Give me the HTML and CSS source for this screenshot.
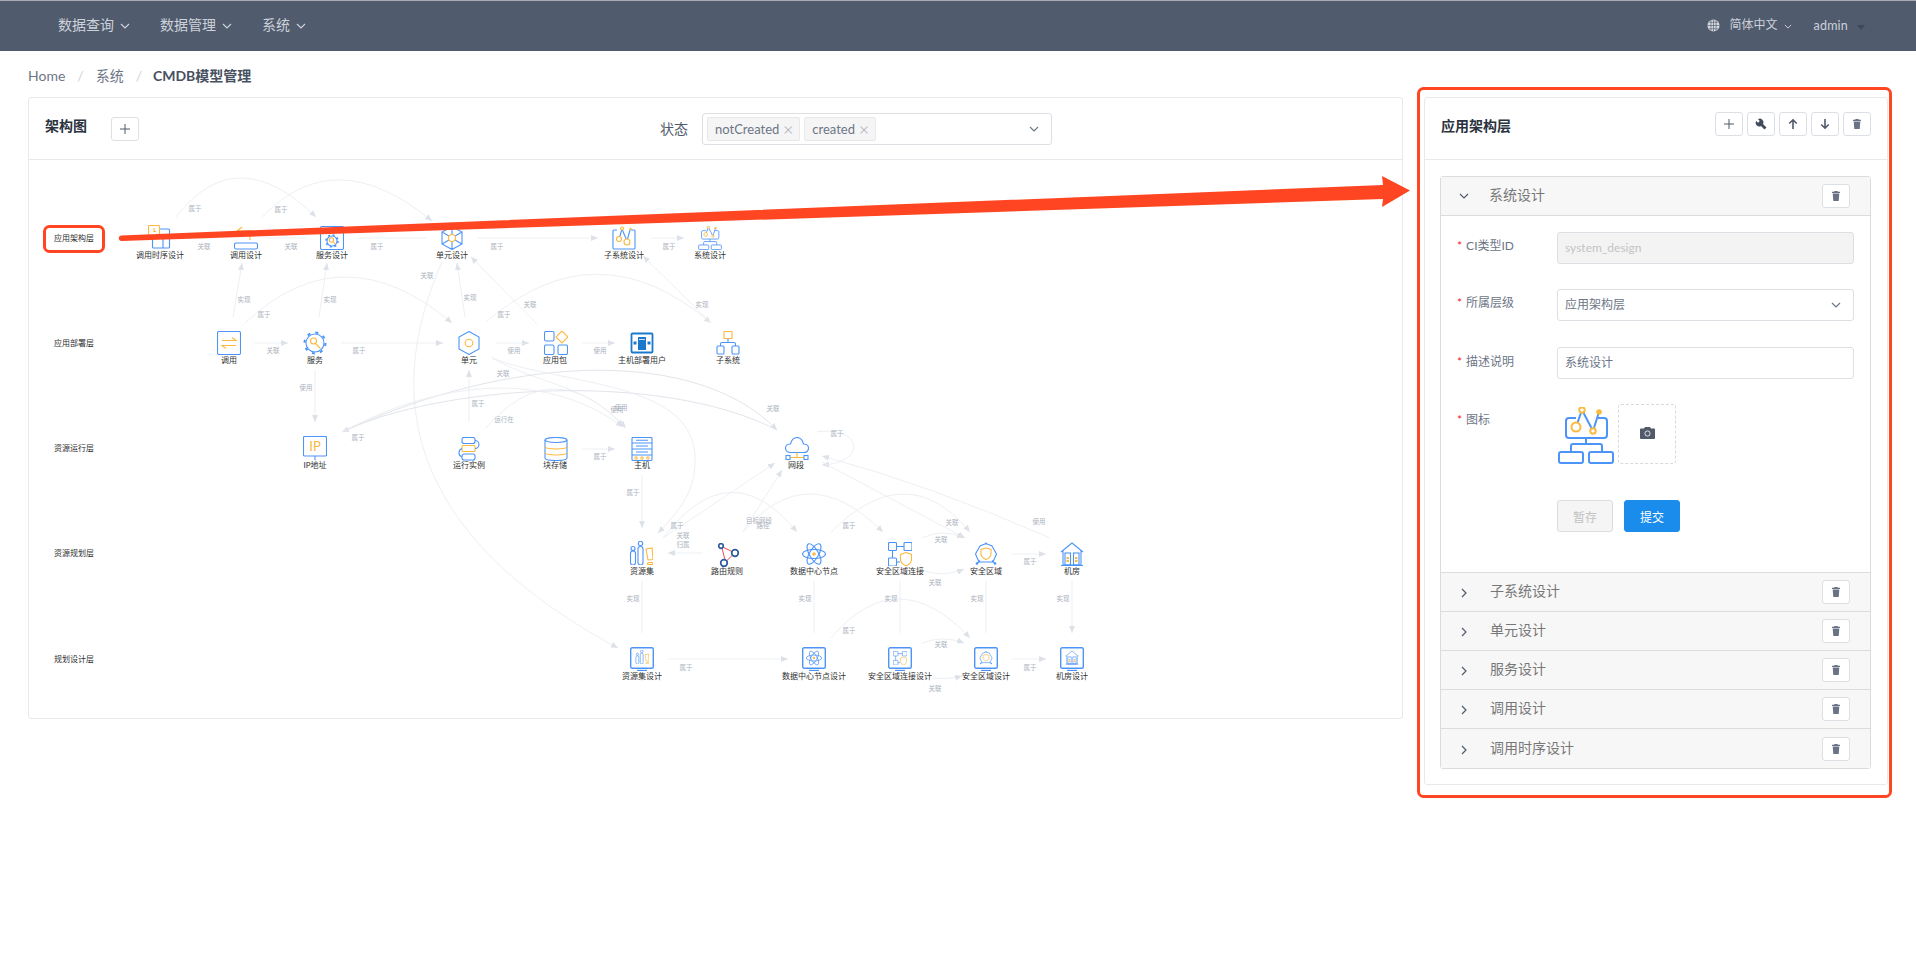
FILE: index.html
```html
<!DOCTYPE html>
<html lang="zh-CN">
<head>
<meta charset="utf-8">
<title>CMDB模型管理</title>
<link rel="stylesheet" href="styles.css">
</head>
<body>
<svg class="sprite" xmlns="http://www.w3.org/2000/svg">
  <symbol id="chev-d" viewBox="0 0 10 6"><path class="ch" d="M1 1l4 4 4-4"/></symbol>
  <symbol id="chev-r" viewBox="0 0 6 10"><path class="ch" d="M1 1l4 4-4 4"/></symbol>
  <symbol id="trash" viewBox="0 0 12 12"><path class="it" d="M4.500 1h3l.4.8h2.100v1.100H2V1.800h2.100zM2.700 3.500h6.600l-.6 7.500H3.300z"/></symbol>
  <symbol id="plus" viewBox="0 0 12 12"><path class="ic" d="M6 1v10M1 6h10"/></symbol>
  <symbol id="wrench" viewBox="0 0 12 12"><path class="ig" d="M1.200 3L3 4.800 4.800 3 3 1.200A3.600 3.600 0 0 1 8 6l3.500 3.500-2 2L6 8A3.600 3.600 0 0 1 1.200 3z"/></symbol>
  <symbol id="up" viewBox="0 0 12 12"><path class="ia" d="M6 11V2M2.300 5.500L6 1.800l3.700 3.700"/></symbol>
  <symbol id="down" viewBox="0 0 12 12"><path class="ia" d="M6 1v9M2.300 6.500L6 10.200l3.700-3.700"/></symbol>

  <symbol id="i-seq" viewBox="0 0 24 24"><rect class="y" x=".5" y=".5" width="11" height="11" rx="1"/><path class="y" d="M6 3v3.500h2"/><path class="b" d="M12 4h8.500a1 1 0 0 1 1 1v17a1 1 0 0 1-1 1h-15a1 1 0 0 1-1-1V12M15 12.500V23M5 13h17"/></symbol>
  <symbol id="i-cald" viewBox="0 0 24 24"><path class="y" d="M8 1L3 5l5 4M3 5h13v9"/><rect class="b" x=".5" y="17" width="23" height="6" rx="1.500"/></symbol>
  <symbol id="i-svcd" viewBox="0 0 24 24"><rect class="b" x=".5" y=".5" width="23" height="23" rx="1.500"/><circle class="b" cx="12" cy="15" r="5"/><circle class="b td" cx="12" cy="15" r="6"/><circle class="y" cx="11.500" cy="14" r="2.200"/><path class="y" d="M13 15.500l2.500 3"/></symbol>
  <symbol id="i-unitd" viewBox="0 0 24 24"><path class="b" d="M12 .5L22 6v12l-10 5.500L2 18V6zM12 .5V8M2 6l7 4M22 6l-7 4M2 18l7-4M22 18l-7-4M12 16v7.500"/><circle class="y" cx="12" cy="12" r="3.500"/></symbol>
  <symbol id="i-subd" viewBox="0 0 24 24"><path class="b" d="M5 4H2a1 1 0 0 0-1 1v17a1 1 0 0 0 1 1h20a1 1 0 0 0 1-1V5a1 1 0 0 0-1-1h-3M7 13l3-10 5 12 3-11"/><circle class="y w" cx="7" cy="13" r="2.500"/><circle class="y w" cx="10" cy="2.500" r="1.500"/><circle class="y w" cx="15" cy="16" r="3"/><circle class="yf" cx="18.500" cy="3" r="1.200"/></symbol>
  <symbol id="i-sys" viewBox="0 0 56 57"><path class="b s2" d="M18 11H11a3 3 0 0 0-3 3v14a3 3 0 0 0 3 3h35a3 3 0 0 0 3-3V14a3 3 0 0 0-3-3h-6M18 20L24 3l11 21 6-19M28 31v6M13 45v-6a2 2 0 0 1 2-2h27a2 2 0 0 1 2 2v6"/><rect class="b s2" x="1" y="45" width="24" height="11" rx="2"/><rect class="b s2" x="31" y="45" width="24" height="11" rx="2"/><circle class="y w s2" cx="18" cy="20" r="4.500"/><circle class="y w s2" cx="24" cy="3" r="2.700"/><circle class="y w s2" cx="35" cy="24" r="2.700"/><circle class="yf" cx="41" cy="5" r="2.800"/></symbol>
  <symbol id="i-call" viewBox="0 0 24 24"><rect class="b" x=".5" y=".5" width="23" height="23" rx="1.500"/><path class="y" d="M5 9.500h14l-4-3M19 14.500H5l4 3"/></symbol>
  <symbol id="i-svc" viewBox="0 0 24 24"><circle class="b" cx="12" cy="12" r="9"/><circle class="b td2" cx="12" cy="12" r="10.500"/><circle class="y" cx="10.500" cy="10" r="3"/><path class="y" d="M12.500 12.500l5 5"/></symbol>
  <symbol id="i-unit" viewBox="0 0 24 24"><path class="b" d="M12 .5L22 6v12l-10 5.500L2 18V6z"/><circle class="y" cx="12" cy="12" r="3.800"/></symbol>
  <symbol id="i-pkg" viewBox="0 0 24 24"><rect class="b" x=".5" y=".5" width="9.500" height="9.500" rx="1.500"/><path class="y" d="M18 0l6 6-6 6-6-6z"/><rect class="b" x=".5" y="14" width="9.500" height="9.500" rx="1.500"/><rect class="b" x="14" y="14" width="9.500" height="9.500" rx="1.500"/></symbol>
  <symbol id="i-hu" viewBox="0 0 24 24"><rect class="hu" x="1.500" y="2.500" width="21" height="19" rx="1"/><rect class="huf" x="8" y="6" width="8" height="13"/><rect class="huf" x="3.500" y="10.500" width="3" height="3"/><rect class="huf" x="17.500" y="10.500" width="3" height="3"/><path class="hw" d="M9 8.500h6"/></symbol>
  <symbol id="i-sub" viewBox="0 0 24 24"><rect class="y" x="8" y=".5" width="8" height="7" rx=".5"/><path class="b" d="M12 7.500v4M4.500 15v-2A1.500 1.500 0 0 1 6 11.500h12a1.500 1.500 0 0 1 1.500 1.500v2"/><rect class="b" x="1" y="15" width="7" height="8" rx="1"/><rect class="b" x="16" y="15" width="7" height="8" rx="1"/></symbol>
  <symbol id="i-ip" viewBox="0 0 24 24"><rect class="b" x=".5" y=".5" width="23" height="19.500" rx="1"/><path class="b" d="M12 20v4"/><text class="ipt" x="12" y="15">IP</text></symbol>
  <symbol id="i-inst" viewBox="0 0 24 24"><rect class="b" x="5" y=".5" width="13" height="6" rx="2"/><rect class="y" x="5" y="8.500" width="13" height="6" rx="1"/><rect class="b" x="5" y="17" width="13" height="6" rx="2"/><path class="b" d="M18 3.500a4 4 0 0 1 0 8M5 11.500a4.500 4.500 0 0 0 0 8.500"/></symbol>
  <symbol id="i-store" viewBox="0 0 24 24"><ellipse class="b" cx="12" cy="3" rx="11" ry="2.500"/><path class="b" d="M1 3v18c0 1.500 5 2.500 11 2.500s11-1 11-2.500V3"/><path class="y" d="M1 9.500c0 1.500 5 2.500 11 2.500s11-1 11-2.500M1 15.500c0 1.500 5 2.500 11 2.500s11-1 11-2.500"/></symbol>
  <symbol id="i-host" viewBox="0 0 24 24"><rect class="b" x="2" y=".5" width="20" height="23" rx="1"/><path class="b" d="M2 6h20M2 12h20M2 18h20M6 3.300h12M6 9h12M6 15h12"/><circle class="y" cx="6" cy="21" r="1.200"/><circle class="y" cx="12" cy="21" r="1.200"/><circle class="y" cx="18" cy="21" r="1.200"/></symbol>
  <symbol id="i-net" viewBox="0 0 24 24"><path class="b" d="M6 15.500C2 15.500.5 13 .5 11 .5 8.500 3 7 5.500 7 6.500 3 9 .5 12 .5c3.500 0 5.500 2.500 6.500 6.500 2.500 0 5 1.500 5 4 0 2.500-2 4.500-5.500 4.500z"/><path class="y" d="M12 15.500v5M5 20.500h14"/><rect class="b" x="1" y="18.500" width="4" height="4"/><rect class="b" x="19" y="18.500" width="4" height="4"/></symbol>
  <symbol id="i-rs" viewBox="0 0 24 24"><rect class="b" x="1.500" y="10" width="5" height="14" rx="2.500"/><circle class="b" cx="4" cy="7.500" r="2"/><rect class="b" x="9" y="5.500" width="5" height="18.500" rx="2.500"/><circle class="b" cx="11.500" cy="2.500" r="2.200"/><path class="y" d="M17 8l6-1 1 11.500-5 .5z"/><rect class="y" x="18.500" y="21.500" width="5.500" height="2" rx="1"/></symbol>
  <symbol id="i-route" viewBox="0 0 24 24"><path class="r" d="M6 5l3 12M6.500 4L17 9M10.500 18l6-6"/><circle class="dk" cx="5" cy="3" r="2.300"/><circle class="dk" cx="19" cy="10" r="3.300"/><circle class="dk" cx="8" cy="20" r="3.300"/></symbol>
  <symbol id="i-dc" viewBox="0 0 24 24"><ellipse class="b" cx="12" cy="12" rx="11.500" ry="4.500"/><ellipse class="b" cx="12" cy="12" rx="11.500" ry="4.500" transform="rotate(60 12 12)"/><ellipse class="b" cx="12" cy="12" rx="11.500" ry="4.500" transform="rotate(120 12 12)"/><circle class="yf" cx="12" cy="12" r="1.800"/></symbol>
  <symbol id="i-secl" viewBox="0 0 24 24"><rect class="b" x=".5" y=".5" width="8" height="8" rx="1"/><rect class="b" x="16" y=".5" width="8" height="8" rx="1"/><rect class="b" x=".5" y="16" width="8" height="8" rx="1"/><path class="b" d="M8.500 4.500H16M4.500 8.500V16M8.500 20H12"/><path class="y w" d="M18 10.500l5.500 2v5c0 3-2.500 5-5.500 6.500-3-1.500-5.500-3.500-5.500-6.500v-5z"/></symbol>
  <symbol id="i-sec" viewBox="0 0 24 24"><path class="b" d="M12 1.500L6 4 1.500 12 5 20h14l3.500-8L18 4zM3 21.500l3-3M21 21.500l-3-3"/><circle class="bf" cx="12" cy="1.500" r="1"/><circle class="bf" cx="3" cy="21.500" r="1.300"/><circle class="bf" cx="21" cy="21.500" r="1.300"/><path class="y" d="M12 6l5 1.500v4c0 3-2.500 5-5 6-2.500-1-5-3-5-6v-4z"/></symbol>
  <symbol id="i-room" viewBox="0 0 24 24"><path class="b" d="M1 10L12 1l11 9M3 8.500V23h18V8.500M1 23.500h22"/><rect class="b" x="5" y="11" width="5.500" height="12"/><rect class="b" x="13.500" y="11" width="5.500" height="12"/><path class="yb" d="M7.700 15v6M16.200 15v6"/></symbol>
  <symbol id="i-frame" viewBox="0 0 24 24"><rect class="b s13" x=".7" y=".7" width="22.600" height="20.600" rx="1.500"/><path class="b s13" d="M7 23.500h10"/></symbol>
</svg>

<header class="topbar">
  <nav class="nav">
    <a class="nav-item">数据查询<svg class="nav-chev"><use href="#chev-d"/></svg></a>
    <a class="nav-item">数据管理<svg class="nav-chev"><use href="#chev-d"/></svg></a>
    <a class="nav-item">系统<svg class="nav-chev"><use href="#chev-d"/></svg></a>
  </nav>
  <div class="top-right">
    <svg class="globe" viewBox="0 0 14 14"><circle class="gf" cx="7" cy="7" r="6.500"/><path class="gl" d="M.5 7h13M7 .5v13M2 3.500h10M2 10.500h10M4.300 1.200v11.600M9.700 1.200v11.600"/></svg>
    <span class="lang">简体中文</span><svg class="nav-chev lang-chev"><use href="#chev-d"/></svg>
    <span class="user">admin</span><span class="caret"></span>
  </div>
</header>

<div class="crumbs">
  <span>Home</span><i>/</i><span>系统</span><i>/</i><b>CMDB模型管理</b>
</div>

<main class="layout">
  <section class="card">
    <div class="card-head">
      <h2 class="card-title">架构图</h2>
      <button class="btn add-btn"><svg class="ico"><use href="#plus"/></svg></button>
      <div class="filter">
        <label class="filter-label">状态</label>
        <div class="multi">
          <span class="tag">notCreated<em>×</em></span>
          <span class="tag">created<em>×</em></span>
          <svg class="sel-chev"><use href="#chev-d"/></svg>
        </div>
      </div>
    </div>
    <svg class="graph" viewBox="29 160 1373 558" xmlns="http://www.w3.org/2000/svg">
      <defs><marker id="a" viewBox="0 0 7 6" refX="7" refY="3" markerWidth="7" markerHeight="6" markerUnits="userSpaceOnUse" orient="auto"><path d="M0 0l7 3-7 3z" fill="#dde1e8"/></marker></defs>
      <g class="edges" marker-end="url(#a)">
        <path d="M177 238H218M265 238H306M358 238H426M478 238H598"/>
        <path d="M651 238H684"/>
        <path d="M176 217Q236 139 316 217"/><path d="M262 217Q335 141 432 221"/>
        <path d="M233 317L242 263"/><path d="M319 317L327 263"/><path d="M465 317L457 263"/>
        <path d="M245 323Q343 231 452 323"/><path d="M486 322Q597 226 711 323"/>
        <path d="M537 324L471 257"/><path d="M711 323L643 256"/>
        <path d="M442 262C395 370 380 520 618 648"/>
        <path d="M255 343H288"/><path d="M341 343H443"/><path d="M496 343H529"/><path d="M582 343H615"/>
        <path d="M315 370V422"/><path d="M469 422V370"/>
        <path d="M486 428Q553 350 626 428"/>
        <path d="M492 358C540 385 590 385 623 427"/>
        <path class="dk-e" d="M342 432C520 350 700 350 777 430"/>
        <path class="dk-e" d="M777 430C660 370 440 385 342 432"/>
        <path d="M342 432C430 385 540 365 623 427"/>
        <path d="M492 358C560 385 690 380 695 455C697 490 680 510 658 533"/>
        <path d="M582 449H615"/><path d="M642 475V528"/>
        <path d="M817 432C860 425 870 462 822 465"/>
        <path d="M1050 538Q930 485 822 456"/><path d="M822 462L965 538"/>
        <path d="M663 538L775 463"/><path d="M743 532L782 470"/><path d="M702 553H668"/>
        <path d="M663 538Q730 450 797 532"/><path d="M743 532Q807 456 883 532"/><path d="M831 532Q907 456 970 532"/>
        <path d="M922 538Q943 528 964 538"/><path d="M922 570Q943 578 964 569"/>
        <path d="M1012 554H1046"/>
        <path d="M642 581V633M814 581V633M900 581V633M986 581V633M1072 581V633"/>
        <path d="M668 659H788"/>
        <path d="M831 638Q897 560 970 638"/>
        <path d="M922 643Q943 635 964 643"/><path d="M932 678Q948 680 962 676"/>
        <path d="M1012 659H1046"/>
      </g>
      <g class="el">
        <text x="195" y="211">属于</text><text x="281" y="212">属于</text>
        <text x="204" y="249">关联</text><text x="291" y="249">关联</text><text x="377" y="249">属于</text><text x="497" y="249">属于</text><text x="669" y="249">属于</text>
        <text x="427" y="278">关联</text><text x="244" y="302">实现</text><text x="330" y="302">实现</text><text x="470" y="300">实现</text>
        <text x="530" y="307">关联</text><text x="702" y="307">实现</text><text x="264" y="317">属于</text><text x="504" y="317">属于</text>
        <text x="273" y="353">关联</text><text x="359" y="353">属于</text><text x="514" y="353">使用</text><text x="600" y="353">使用</text>
        <text x="503" y="376">关联</text><text x="306" y="390">使用</text><text x="478" y="406">属于</text><text x="504" y="422">运行在</text>
        <text x="617" y="412">使用</text><text x="621" y="410">使用</text><text x="773" y="411">关联</text><text x="837" y="436">属于</text>
        <text x="358" y="440">属于</text><text x="600" y="459">属于</text><text x="633" y="495">属于</text>
        <text x="1039" y="524">使用</text><text x="952" y="525">关联</text><text x="677" y="528">属于</text><text x="759" y="523">目标网段</text><text x="763" y="528">路径</text>
        <text x="849" y="528">属于</text><text x="683" y="538">关联</text><text x="683" y="547">归属</text><text x="941" y="542">关联</text><text x="1030" y="564">属于</text><text x="935" y="585">关联</text>
        <text x="633" y="601">实现</text><text x="805" y="601">实现</text><text x="891" y="601">实现</text><text x="977" y="601">实现</text><text x="1063" y="601">实现</text>
        <text x="849" y="633">属于</text><text x="941" y="647">关联</text><text x="686" y="670">属于</text><text x="1030" y="670">属于</text><text x="935" y="691">关联</text>
      </g>
      <use href="#i-seq" x="148" y="225" width="24" height="24"/>
      <use href="#i-cald" x="234" y="226" width="24" height="24"/>
      <use href="#i-svcd" x="320" y="226" width="24" height="24"/>
      <use href="#i-unitd" x="440" y="226" width="24" height="24"/>
      <use href="#i-subd" x="612" y="226" width="24" height="24"/>
      <use href="#i-sys" x="698" y="226" width="24" height="24"/>
      <use href="#i-call" x="217" y="331" width="24" height="24"/>
      <use href="#i-svc" x="303" y="331" width="24" height="24"/>
      <use href="#i-unit" x="457" y="331" width="24" height="24"/>
      <use href="#i-pkg" x="544" y="331" width="24" height="24"/>
      <use href="#i-hu" x="630" y="331" width="24" height="24"/>
      <use href="#i-sub" x="716" y="331" width="24" height="24"/>
      <use href="#i-ip" x="303" y="436" width="24" height="24"/>
      <use href="#i-inst" x="457" y="437" width="24" height="24"/>
      <use href="#i-store" x="544" y="437" width="24" height="24"/>
      <use href="#i-host" x="630" y="437" width="24" height="24"/>
      <use href="#i-net" x="785" y="437" width="24" height="24"/>
      <use href="#i-rs" x="629" y="541" width="24" height="24"/>
      <use href="#i-route" x="716" y="543" width="24" height="24"/>
      <use href="#i-dc" x="802" y="542" width="24" height="24"/>
      <use href="#i-secl" x="888" y="542" width="24" height="24"/>
      <use href="#i-sec" x="974" y="542" width="24" height="24"/>
      <use href="#i-room" x="1060" y="542" width="24" height="24"/>
      <use href="#i-frame" x="630" y="647" width="24" height="24"/><use href="#i-rs" x="635" y="650" width="14" height="14"/>
      <use href="#i-frame" x="802" y="647" width="24" height="24"/><use href="#i-dc" x="806" y="650" width="16" height="16"/>
      <use href="#i-frame" x="888" y="647" width="24" height="24"/><use href="#i-secl" x="893" y="651" width="14" height="14"/>
      <use href="#i-frame" x="974" y="647" width="24" height="24"/><use href="#i-sec" x="979" y="651" width="14" height="14"/>
      <use href="#i-frame" x="1060" y="647" width="24" height="24"/><use href="#i-room" x="1065" y="650" width="14" height="15"/>
      <g class="nl">
        <text x="160" y="258">调用时序设计</text><text x="246" y="258">调用设计</text><text x="332" y="258">服务设计</text><text x="452" y="258">单元设计</text><text x="624" y="258">子系统设计</text><text x="710" y="258">系统设计</text>
        <text x="229" y="363">调用</text><text x="315" y="363">服务</text><text x="469" y="363">单元</text><text x="555" y="363">应用包</text><text x="642" y="363">主机部署用户</text><text x="728" y="363">子系统</text>
        <text x="315" y="468">IP地址</text><text x="469" y="468">运行实例</text><text x="555" y="468">块存储</text><text x="642" y="468">主机</text><text x="796" y="468">网段</text>
        <text x="642" y="574">资源集</text><text x="727" y="574">路由规则</text><text x="814" y="574">数据中心节点</text><text x="900" y="574">安全区域连接</text><text x="986" y="574">安全区域</text><text x="1072" y="574">机房</text>
        <text x="642" y="679">资源集设计</text><text x="814" y="679">数据中心节点设计</text><text x="900" y="679">安全区域连接设计</text><text x="986" y="679">安全区域设计</text><text x="1072" y="679">机房设计</text>
        <text x="74" y="241">应用架构层</text><text x="74" y="346">应用部署层</text><text x="74" y="451">资源运行层</text><text x="74" y="556">资源规划层</text><text x="74" y="662">规划设计层</text>
      </g>
    </svg>
  </section>

  <section class="card">
    <div class="card-head">
      <h2 class="card-title">应用架构层</h2>
      <div class="tools">
        <button class="btn"><svg class="ico"><use href="#plus"/></svg></button>
        <button class="btn"><svg class="ico"><use href="#wrench"/></svg></button>
        <button class="btn"><svg class="ico"><use href="#up"/></svg></button>
        <button class="btn"><svg class="ico"><use href="#down"/></svg></button>
        <button class="btn"><svg class="ico"><use href="#trash"/></svg></button>
      </div>
    </div>
    <div class="card-body">
      <div class="collapse">
        <div class="panel-head">
          <svg class="p-chev-d"><use href="#chev-d"/></svg>
          <span class="panel-title">系统设计</span>
          <button class="btn"><svg class="ico"><use href="#trash"/></svg></button>
        </div>
        <form class="form">
          <div class="row">
            <label class="lbl"><em>*</em>CI类型ID</label>
            <div class="field disabled">system_design</div>
          </div>
          <div class="row">
            <label class="lbl"><em>*</em>所属层级</label>
            <div class="field">应用架构层<svg class="sel-chev"><use href="#chev-d"/></svg></div>
          </div>
          <div class="row row-shift">
            <label class="lbl lbl-low"><em>*</em>描述说明</label>
            <div class="field">系统设计</div>
          </div>
          <div class="row row-icon">
            <label class="lbl lbl-icon"><em>*</em>图标</label>
            <div class="icon-field">
              <svg class="big-icon"><use href="#i-sys"/></svg>
              <div class="upload">
                <svg class="camera" viewBox="0 0 15 12"><path class="cam" d="M5 0h5l1 1.500h3a1 1 0 0 1 1 1V11a1 1 0 0 1-1 1H1a1 1 0 0 1-1-1V2.500a1 1 0 0 1 1-1h3z"/><circle class="lens" cx="7.500" cy="6.500" r="2.600"/><circle class="cam" cx="7.500" cy="6.500" r="1"/></svg>
              </div>
            </div>
          </div>
          <div class="row row-actions">
            <span></span>
            <div class="actions">
              <button type="button" class="act ghost">暂存</button>
              <button type="button" class="act primary">提交</button>
            </div>
          </div>
        </form>
        <div class="panel-head"><svg class="p-chev-r"><use href="#chev-r"/></svg><span class="panel-title">子系统设计</span><button class="btn"><svg class="ico"><use href="#trash"/></svg></button></div>
        <div class="panel-head"><svg class="p-chev-r"><use href="#chev-r"/></svg><span class="panel-title">单元设计</span><button class="btn"><svg class="ico"><use href="#trash"/></svg></button></div>
        <div class="panel-head"><svg class="p-chev-r"><use href="#chev-r"/></svg><span class="panel-title">服务设计</span><button class="btn"><svg class="ico"><use href="#trash"/></svg></button></div>
        <div class="panel-head"><svg class="p-chev-r"><use href="#chev-r"/></svg><span class="panel-title">调用设计</span><button class="btn"><svg class="ico"><use href="#trash"/></svg></button></div>
        <div class="panel-head"><svg class="p-chev-r"><use href="#chev-r"/></svg><span class="panel-title">调用时序设计</span><button class="btn"><svg class="ico"><use href="#trash"/></svg></button></div>
      </div>
    </div>
  </section>
</main>

<svg class="annot" viewBox="0 0 1916 976" xmlns="http://www.w3.org/2000/svg">
  <rect class="mark" x="44.500" y="226.500" width="59" height="25" rx="5"/>
  <rect class="mark" x="1418.500" y="88.500" width="472" height="708" rx="5"/>
  <path class="arrow" d="M121 235.500L1383 185 1382 176 1410 190.500 1382 207 1383 199 121 241A2.800 2.800 0 0 1 121 235.500z"/>
</svg>
</body>
</html>
```
FILE: styles.css
```css
* { box-sizing: border-box; }
html, body { margin: 0; padding: 0; background: #fff; }
body {
  font-family: Lato, "Noto Sans CJK SC", sans-serif;
  font-size: 12px;
  color: #505a6b;
  position: relative;
  min-height: 976px;
  overflow: hidden;
}
.sprite { display: none; }

/* top bar */
.topbar {
  height: 51px;
  background: #505b6d;
  border-top: 1px solid #a9acb1;
  display: flex;
  align-items: center;
  justify-content: space-between;
  padding: 0 51px 2px 58px;
  color: #cdd2da;
}
.nav { display: flex; gap: 30px; }
.nav-item { display: flex; align-items: center; gap: 6px; font-size: 14px; line-height: 20px; }
.nav-chev { width: 10px; height: 6px; margin-top: 2px; }
.top-right { display: flex; align-items: center; font-size: 12px; }
.globe { width: 13px; height: 13px; margin-right: 10px; }
.lang { line-height: 16px; }
.lang-chev { width: 8px; height: 5px; margin-left: 6px; }
.user { margin-left: 22px; font-size: 12.500px; letter-spacing: .2px; }
.caret {
  margin-left: 9px;
  width: 0;
  height: 0;
  margin-top: 4px;
  border-left: 4.500px solid transparent;
  border-right: 4.500px solid transparent;
  border-top: 5px solid #3f4858;
}
.gf { fill: #d6dae0; }
.gl { stroke: #505b6d; stroke-width: .7; fill: none; }
.ch { fill: none; stroke: currentColor; stroke-width: 1.200; }

/* breadcrumb */
.crumbs {
  height: 46px;
  padding: 2px 0 0 28px;
  display: flex;
  align-items: center;
  font-size: 14px;
  color: #6d7686;
}
.crumbs i { font-style: normal; color: #cfd3d9; margin: 0 12px; }
.crumbs i:nth-of-type(2) { margin-right: 11px; }
.crumbs b { font-weight: 700; color: #47505f; }

/* layout */
.layout {
  display: grid;
  grid-template-columns: 1375px 464px;
  column-gap: 21px;
  padding-left: 28px;
  align-items: start;
}
.card { border: 1px solid #e9e9e9; border-radius: 3px; background: #fff; }
.card-head {
  height: 62px;
  border-bottom: 1px solid #e9e9e9;
  padding: 0 16px;
  display: flex;
  align-items: center;
}
.card-title { margin: 0 0 5px; font-size: 14px; line-height: 20px; font-weight: 700; color: #2b3340; }
.btn {
  width: 28px;
  height: 24px;
  padding: 0;
  background: #fff;
  border: 1px solid #dcdfe4;
  border-radius: 3px;
  display: inline-flex;
  align-items: center;
  justify-content: center;
}
.add-btn { margin: 0 0 0 24px; }
.ico { width: 12px; height: 12px; color: #505a6b; }
.ic { fill: none; stroke: #505a6b; stroke-width: 1; }
.ia { fill: none; stroke: #505a6b; stroke-width: 1.600; }
.ig { fill: #434c5c; }
.it { fill: #6a7385; }
.tools { margin: 0 0 9px auto; display: flex; gap: 4px; }

/* filter */
.filter { margin-left: auto; margin-right: 334px; display: flex; align-items: center; gap: 14px; }
.filter-label { font-size: 14px; color: #505a6b; margin-bottom: 2px; }
.multi {
  width: 350px;
  height: 32px;
  border: 1px solid #dcdfe4;
  border-radius: 3px;
  padding: 0 4px;
  display: flex;
  align-items: center;
  gap: 4px;
  position: relative;
}
.tag {
  height: 24px;
  padding: 0 5px 0 7px;
  background: #f5f5f5;
  border: 1px solid #e8e8e8;
  border-radius: 2px;
  font-size: 13px;
  line-height: 22px;
  color: #6d7686;
  display: inline-flex;
  align-items: center;
}
.tag em { font-style: normal; font-weight: 300; font-size: 18px; width: 12px; text-align: center; color: #a3a9b3; margin-left: 3px; }
.sel-chev { position: absolute; right: 12px; top: 50%; margin-top: -3px; width: 10px; height: 6px; color: #6d7686; }

/* graph */
.graph { display: block; width: 1373px; height: 558px; }
.edges path { fill: none; stroke: #edeff3; stroke-width: 1; }
.edges .dk-e { stroke: #e2e5eb; }
.el text { font-size: 6.500px; fill: #aab1bd; text-anchor: middle; }
.nl text { font-size: 8px; fill: #2f2f2f; text-anchor: middle; }
.b { fill: none; stroke: #4d94f8; stroke-width: 1.100; }
.y { fill: none; stroke: #fbb93f; stroke-width: 1.100; }
.w { fill: #fff; }
.yf { fill: #fbb93f; }
.bf { fill: #4d94f8; }
.yb { fill: none; stroke: #fbb93f; stroke-width: 2.500; stroke-dasharray: 2 1; }
.s2 { stroke-width: 2; }
.s13 { stroke-width: 1.400; }
.td { stroke-width: 1.600; stroke-dasharray: 2 2.700; }
.td2 { stroke-width: 2; stroke-dasharray: 3 5.250; }
.hu { fill: none; stroke: #1b79cb; stroke-width: 1.800; }
.huf { fill: #1b79cb; }
.hw { stroke: #fff; stroke-width: .8; fill: none; }
.r { fill: none; stroke: #f0324a; stroke-width: .9; }
.dk { fill: #fff; stroke: #2b5a9e; stroke-width: 1.700; }
.ipt { font-size: 13px; fill: #fbb93f; text-anchor: middle; font-family: Lato, sans-serif; }

/* right panel */
.card-body { padding: 16px 16px 15px 15px; }
.collapse { border: 1px solid #dcdcdc; border-radius: 3px; }
.collapse .panel-head:last-child { border-bottom: 0; }
.panel-head {
  height: 39px;
  background: #f7f7f7;
  border-bottom: 1px solid #dcdcdc;
  display: flex;
  align-items: center;
  padding-left: 18px;
  padding-right: 20px;
}
.p-chev-d { width: 10px; height: 6px; color: #505a6b; margin: 0 20px 0 0; }
.p-chev-r { width: 6px; height: 10px; color: #505a6b; margin: 2px 23px 0 2px; }
.panel-title { font-size: 14px; line-height: 20px; color: #777; flex: 1; margin-top: -2px; }
.form { padding: 16px 16px 40px; background: #fff; border-bottom: 1px solid #dcdcdc; }
.row { display: grid; grid-template-columns: 100px 1fr; margin-bottom: 25px; }
.row-shift { margin-top: 26px; }
.lbl { font-size: 12px; line-height: 28px; color: #6d7686; }
.lbl em { font-style: normal; color: #f5222d; margin-right: 4px; font-size: 12px; }
.lbl-low { line-height: 30px; }
.lbl-icon { margin-top: 2px; }
.field {
  position: relative;
  height: 32px;
  border: 1px solid #dcdfe4;
  border-radius: 3px;
  padding: 0 7px;
  font-size: 12px;
  line-height: 30px;
  color: #6d7686;
  background: #fff;
}
.field.disabled { background: #f3f3f3; color: #c4c4c4; }
.icon-field { display: flex; align-items: flex-end; height: 60px; gap: 4px; }
.big-icon { width: 56px; height: 57px; margin: 0 0 0 1px; }
.upload {
  width: 58px;
  height: 60px;
  border: 1px dashed #d9d9d9;
  border-radius: 3px;
  display: flex;
  align-items: center;
  justify-content: center;
}
.camera { width: 15px; height: 12px; margin-top: -2px; }
.cam { fill: #505a6b; }
.lens { fill: none; stroke: #fff; stroke-width: .8; }
.row-icon { margin-bottom: 36px; }
.row-actions { margin-bottom: 0; }
.actions { display: flex; gap: 11px; }
.act {
  width: 56px;
  height: 32px;
  border-radius: 3px;
  font-family: inherit;
  font-size: 12px;
  padding: 0;
}
.ghost { background: #f5f5f5; border: 1px solid #dcdcdc; color: #c2c2c2; }
.primary { background: #1a8cec; border: 1px solid #1a8cec; color: #fff; }

/* annotation layer */
.annot { position: absolute; left: 0; top: 0; width: 1916px; height: 976px; pointer-events: none; }
.mark { fill: none; stroke: #ff4521; stroke-width: 3; }
.arrow { fill: #ff4521; }
```
